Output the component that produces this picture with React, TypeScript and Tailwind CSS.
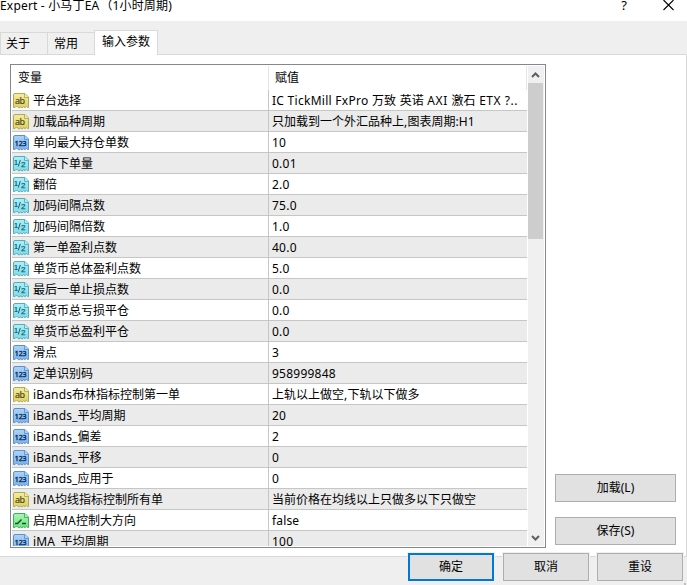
import React from "react";

type Kind = "ab" | "int" | "dbl" | "bool";

const palette: Record<Kind, { edge: string; light: string; dark: string; ink: string }> = {
  ab: { edge: "#b3a94e", light: "#f3eca2", dark: "#dccf6c", ink: "#564e08" },
  int: { edge: "#5b92cd", light: "#acd3f8", dark: "#7db3ea", ink: "#0b3160" },
  dbl: { edge: "#52adbd", light: "#aeeef5", dark: "#80dbe7", ink: "#0d6478" },
  bool: { edge: "#42ad5c", light: "#a9f5b1", dark: "#70df83", ink: "#07591b" },
};

function TypeIcon({ kind }: { kind: Kind }) {
  const p = palette[kind];
  return (
    <svg width="16" height="16" viewBox="0 0 16 16" className="block shrink-0">
      <defs>
        <linearGradient id={`fill-${kind}`} x1="0" y1="0" x2="0" y2="1">
          <stop offset="0" stopColor={p.light} />
          <stop offset="1" stopColor={p.dark} />
        </linearGradient>
      </defs>
      <path
        d="M.5 2Q.5.5 2 .5H12L15.5 4V14.5H14.5L13.5 13.5L12 14.5L10.5 13.8L9 15L7.5 14L6 15L4.5 14L3.5 13L2 14.5H.5Z"
        fill={`url(#fill-${kind})`}
        stroke={p.edge}
      />
      <path d="M11.5.5V4.5H15.5" fill={p.light} stroke={p.edge} strokeWidth=".9" />
      {kind === "bool" && (
        <path d="M2 10.5H4.5L8.5 6.5M9 10.5H13" fill="none" stroke={p.ink} strokeWidth="1.4" />
      )}
      {kind === "dbl" && (
        <g fill={p.ink} fontFamily="Liberation Sans, sans-serif">
          <text x="1" y="9" fontSize="7" fontWeight="700">1</text>
          <path d="M5.3 10.5L7.3 4" stroke={p.ink} strokeWidth="1" />
          <text x="8" y="11" fontSize="8" stroke={p.ink} strokeWidth=".25">2</text>
        </g>
      )}
      {kind === "ab" && (
        <text x="2" y="11" fontSize="9" textLength="10" fill={p.ink} stroke={p.ink} strokeWidth=".2" fontFamily="Noto Sans, sans-serif">
          ab
        </text>
      )}
      {kind === "int" && (
        <text x="1.8" y="11" fontSize="7" textLength="11.8" fill={p.ink} stroke={p.ink} strokeWidth=".4" fontFamily="Noto Sans, sans-serif">
          123
        </text>
      )}
    </svg>
  );
}

const rows: [Kind, string, string][] = [
  ["ab", "平台选择", "IC TickMill FxPro 万致 英诺 AXI 激石 ETX ?.."],
  ["ab", "加载品种周期", "只加载到一个外汇品种上,图表周期:H1"],
  ["int", "单向最大持仓单数", "10"],
  ["dbl", "起始下单量", "0.01"],
  ["dbl", "翻倍", "2.0"],
  ["dbl", "加码间隔点数", "75.0"],
  ["dbl", "加码间隔倍数", "1.0"],
  ["dbl", "第一单盈利点数", "40.0"],
  ["dbl", "单货币总体盈利点数", "5.0"],
  ["dbl", "最后一单止损点数", "0.0"],
  ["dbl", "单货币总亏损平仓", "0.0"],
  ["dbl", "单货币总盈利平仓", "0.0"],
  ["int", "滑点", "3"],
  ["int", "定单识别码", "958999848"],
  ["ab", "iBands布林指标控制第一单", "上轨以上做空,下轨以下做多"],
  ["int", "iBands_平均周期", "20"],
  ["int", "iBands_偏差", "2"],
  ["int", "iBands_平移", "0"],
  ["int", "iBands_应用于", "0"],
  ["ab", "iMA均线指标控制所有单", "当前价格在均线以上只做多以下只做空"],
  ["bool", "启用MA控制大方向", "false"],
  ["int", "iMA_平均周期", "100"],
];

function tracking(run: string) {
  if (/^[\d.]+$/.test(run)) return "tracking-[0.24px]";
  if (/^IC /.test(run)) return "tracking-[0.28px]";
  if (/^ | $/.test(run)) return "tracking-[0.55px]";
  return /^[\x20-\x7e]/.test(run) ? "tracking-[0.15px]" : "";
}

function Label({ text }: { text: string }) {
  const runs = text.match(/[\x20-\x7e]+|[^\x20-\x7e]+/g) ?? [];
  return (
    <>
      {runs.map((run, i) => (
        <span key={i} className={tracking(run)}>
          {run}
        </span>
      ))}
    </>
  );
}

function Arrow({ down = false }: { down?: boolean }) {
  return (
    <svg width="15" height="17" viewBox="0 0 15 17" className="block shrink-0 bg-[#f0f0f0]">
      <path d={down ? "M4 7L7.5 10.5L11 7" : "M4 11L7.5 7.5L11 11"} fill="none" stroke="#606060" strokeWidth="2" />
    </svg>
  );
}

function Button({ children, className }: { children: React.ReactNode; className: string }) {
  return (
    <button className={`flex h-7 shrink-0 items-center justify-center bg-[#e1e1e1] pb-px ${className}`}>{children}</button>
  );
}

export default function App() {
  return (
    <div className="flex h-[585px] w-[687px] flex-col overflow-hidden whitespace-pre bg-[#efefef] font-['Noto_Sans','Noto_Sans_CJK_SC',sans-serif] text-[12px] leading-[18px] text-black">
      <header className="flex h-[21px] shrink-0 justify-between bg-white leading-[12px]">
        <div className="h-3 tracking-[0.18px]">
          Expert - 小马丁EA<span className="ml-px tracking-normal">（</span>1小时周期)
        </div>
        <div className="flex pr-[13px]">
          <span className="mr-[36px] text-[13px] leading-[11px]">?</span>
          <svg width="11" height="11" viewBox="0 0 11 11" className="block">
            <path d="M.5 0L10.5 10M10.5 0L.5 10" stroke="black" strokeWidth="1.1" />
          </svg>
        </div>
      </header>

      <nav className="flex h-[34px] shrink-0 items-end pt-[9px]">
        <div className="h-[23px] w-[47px] border-y border-l border-[#d9d9d9] bg-[#f0f0f0] pl-[5px] pt-[2px]">关于</div>
        <div className="h-[23px] w-[47px] border-y border-l border-[#d9d9d9] bg-[#f0f0f0] pl-[6px] pt-[2px]">常用</div>
        <div className="h-[25px] w-[64px] border-x border-t border-[#d9d9d9] bg-white pl-[7px] pt-[2px]">输入参数</div>
        <div className="h-px flex-1 bg-[#d9d9d9]" />
      </nav>

      <main className="flex h-[502px] shrink-0 border-b border-r border-[#d9d9d9] bg-white pl-[10px] pt-[9px]">
        <section className="flex h-[484px] w-[536px] shrink-0 border border-[#828790] p-px">
          <div className="flex w-[515px] shrink-0 flex-col overflow-hidden">
            <div className="flex h-6 shrink-0 border-r border-[#e5e5e5]">
              <div className="w-[257px] border-r border-[#e5e5e5] pl-[6px] pt-[3px]">变量</div>
              <div className="pl-[6px] pt-[3px]">赋值</div>
            </div>
            {rows.map(([kind, name, value], i) => (
              <div key={i} className={`flex h-[21px] shrink-0 border-b border-[#c6c6c6] ${i % 2 ? "bg-[#ebebeb]" : "bg-white"}`}>
                <div className="flex w-[257px] shrink-0 border-r border-[#c6c6c6] pl-px pt-[3px]">
                  <TypeIcon kind={kind} />
                  <span className="-mt-px ml-[4px]"><Label text={name} /></span>
                </div>
                <div className="pl-[3px] pt-[2px]"><Label text={value} /></div>
              </div>
            ))}
          </div>
          <div className="ml-px flex w-4 shrink-0 flex-col bg-[#f0f0f0]">
            <Arrow />
            <div className="h-[156px] w-[15px] bg-[#cdcdcd]" />
            <div className="flex-1" />
            <Arrow down />
          </div>
        </section>
        <aside className="ml-[9px] flex flex-col gap-[15px] pt-[410px]">
          <Button className="w-[121px] border border-[#adadad]">加载(L)</Button>
          <Button className="w-[121px] border border-[#adadad]">保存(S)</Button>
        </aside>
      </main>

      <footer className="z-10 -mt-[5px] flex shrink-0 justify-end gap-[6px] pr-[3px]">
        <div className="border border-[#f0f0f0] bg-[#f0f0f0]"><Button className="w-[86px] border-2 border-[#0078d7]">确定</Button></div>
        <div className="ml-px border border-[#f0f0f0] bg-[#f0f0f0]"><Button className="w-[86px] border border-[#adadad]">取消</Button></div>
        <div className="border border-[#f0f0f0] bg-[#f0f0f0]"><Button className="w-[86px] border border-[#adadad]">重设</Button></div>
      </footer>
      <div className="mr-px mt-px h-[2px] w-[2px] shrink-0 self-end bg-[#bfbfbf]" />
    </div>
  );
}
